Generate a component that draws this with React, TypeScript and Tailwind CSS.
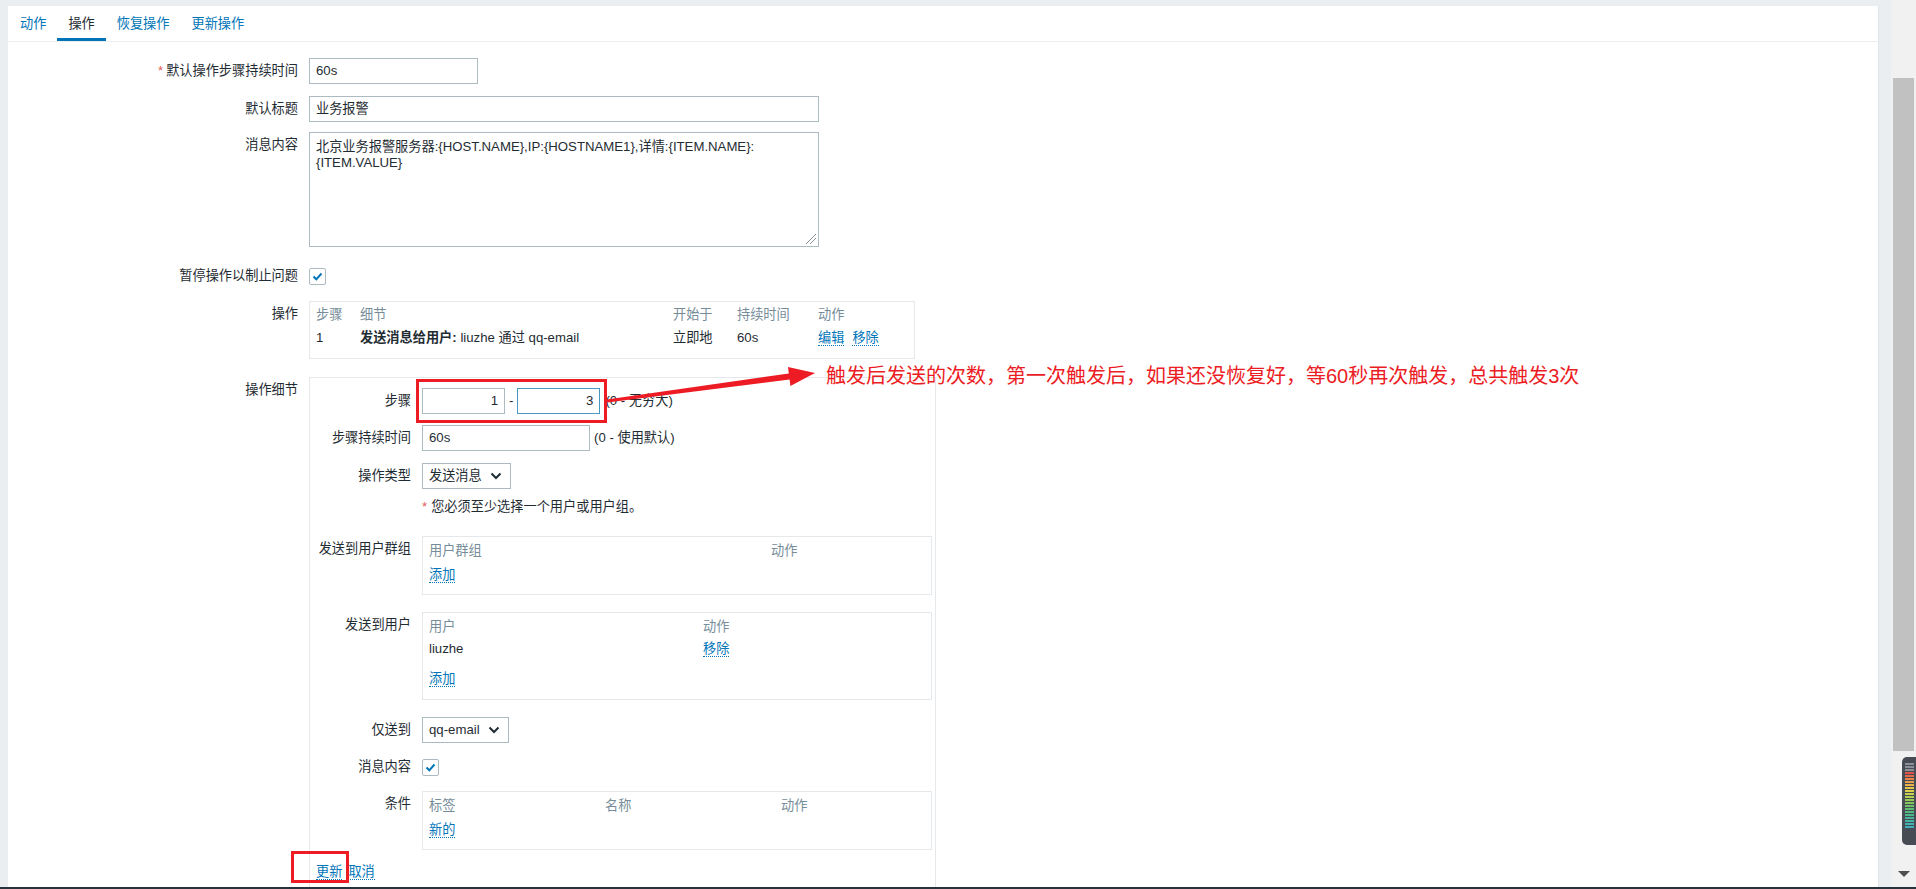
import React from "react";

const FONT = "font-['Liberation_Sans','Noto_Sans_CJK_SC',sans-serif]";
const LINK = "inline-block leading-[15px] text-[#0275b8] border-b border-dotted border-[#0275b8]";
const GREY = "text-[#768d99]";

const tabs = ["动作", "操作", "恢复操作", "更新操作"];

const meterColors = [
  "#8a8f98", "#8a8f98", "#8a8f98", "#e0524a", "#e46a4a", "#e8844a", "#e99c4a", "#e9b24a",
  "#e6c64a", "#d9d04c", "#c6d04e", "#b0cd52", "#98c958", "#82c560", "#6ec169", "#5ebd74",
  "#52ba80", "#4ab78c", "#46b598", "#44b3a4", "#42b1b0", "#40afba",
];

function Checkbox() {
  return (
    <div className="flex h-[17px] w-[17px] items-center justify-center rounded-[2px] border border-[#acbbc2] bg-white">
      <svg width="13" height="13" viewBox="0 0 13 13">
        <polyline points="2.5,6.5 5.3,9.3 10.5,3.5" fill="none" stroke="#0275b8" strokeWidth="2" />
      </svg>
    </div>
  );
}

function Chevron() {
  return (
    <svg width="12" height="8" viewBox="0 0 12 8">
      <polyline points="1.5,1.5 6,6 10.5,1.5" fill="none" stroke="#1f2c33" strokeWidth="2" />
    </svg>
  );
}

function Select({ value, width }: { value: string; width: string }) {
  return (
    <div className={`flex h-[26px] ${width} items-center justify-between border border-[#acbbc2] bg-white pl-[6px] pr-[8px]`}>
      <span>{value}</span>
      <Chevron />
    </div>
  );
}

function Row({ label, required, children, className = "" }: { label: string; required?: boolean; children: React.ReactNode; className?: string }) {
  return (
    <div className={`flex items-start ${className}`}>
      <div className="w-[290px] shrink-0 whitespace-nowrap text-right leading-[26px]">
        {required && <span className="mr-[3px] text-[#e45959]">*</span>}
        {label}
      </div>
      <div className="ml-[11px]">{children}</div>
    </div>
  );
}

function InnerRow({ label, children, className = "" }: { label?: string; children: React.ReactNode; className?: string }) {
  return (
    <div className={`flex items-start ${className}`}>
      <div className="w-[101px] shrink-0 whitespace-nowrap text-right leading-[26px]">{label}</div>
      <div className="relative ml-[11px]">{children}</div>
    </div>
  );
}

function MiniTable({ cols, rows, footer, tall }: { cols: { title: string; w: string }[]; rows?: React.ReactNode[][]; footer: string; tall?: boolean }) {
  return (
    <div className={`w-[510px] border border-[#e6e9eb] px-[6px] pt-[4px] ${tall ? "pb-[8px]" : "pb-[7px]"}`}>
      <div className={`flex h-[20px] items-center ${GREY}`}>
        {cols.map((c) => (
          <div key={c.title} className={c.w}>{c.title}</div>
        ))}
      </div>
      {rows?.map((r, i) => (
        <div key={i} className="flex h-[24px] items-center">
          {r.map((cell, j) => (
            <div key={j} className={cols[j].w}>{cell}</div>
          ))}
        </div>
      ))}
      <div className={`flex h-[24px] items-center ${tall ? "mt-[6px]" : "mt-[2px]"}`}>
        <span className={LINK}>{footer}</span>
      </div>
    </div>
  );
}

function Scrollbar() {
  return (
    <div className="flex w-[25px] shrink-0 flex-col bg-[#f1f1f1]">
      <div className="ml-[2px] mt-[78px] h-[673px] w-[21px] bg-[#c1c1c1]" />
      <div className="ml-[11px] mt-[6px] flex h-[88px] w-[14px] flex-col rounded-l-[5px] bg-[#474b53] pl-[3px] pt-[6px]">
        {meterColors.map((c, i) => (
          <div key={i} className="mb-px h-[2px] w-[9px]" style={{ backgroundColor: c }} />
        ))}
      </div>
      <div className="ml-[7px] mt-[26px]">
        <svg width="12" height="6" viewBox="0 0 12 6">
          <polygon points="0,0 12,0 6,6" fill="#505050" />
        </svg>
      </div>
    </div>
  );
}

export default function App() {
  return (
    <div className={`relative flex h-[889px] w-[1916px] flex-col overflow-hidden bg-[#ebeef0] text-[13.2px] text-[#1f2c33] ${FONT}`}>
      <div className="flex min-h-0 flex-1">
        <div className="min-w-0 flex-1 pl-[8px] pr-[12px] pt-[6px]">
          <div className="h-full overflow-hidden border-r border-[#dfe4e7] bg-white">
            {/* tabs */}
            <div className="flex h-[36px] border-b border-[#ebeef0] pl-px">
              {tabs.map((t) => (
                <div
                  key={t}
                  className={`flex items-center border-b-[3px] px-[11px] pt-[3px] ${
                    t === "操作" ? "border-[#0275b8] text-[#1f2c33]" : "border-transparent text-[#0275b8]"
                  }`}
                >
                  {t}
                </div>
              ))}
            </div>

            <Row label="默认操作步骤持续时间" required className="mt-[16px]">
              <div className="flex h-[26px] w-[169px] items-center border border-[#acbbc2] px-[6px]">60s</div>
            </Row>
            <Row label="默认标题" className="mt-[12px]">
              <div className="flex h-[26px] w-[510px] items-center border border-[#acbbc2] px-[6px]">业务报警</div>
            </Row>
            <Row label="消息内容" className="mt-[10px]">
              <div className="relative h-[115px] w-[510px] border border-[#acbbc2] px-[6px] pt-[6px] leading-[16px]">
                北京业务报警服务器:{"{HOST.NAME}"},IP:{"{HOSTNAME1}"},详情:{"{ITEM.NAME}"}:
                <br />
                {"{ITEM.VALUE}"}
                <svg className="absolute bottom-[2px] right-[2px]" width="11" height="11" viewBox="0 0 11 11">
                  <line x1="1" y1="11" x2="11" y2="1" stroke="#8a959b" strokeWidth="1" />
                  <line x1="5" y1="11" x2="11" y2="5" stroke="#8a959b" strokeWidth="1" />
                </svg>
              </div>
            </Row>
            <Row label="暂停操作以制止问题" className="mt-[16px]">
              <div className="flex h-[26px] items-center">
                <Checkbox />
              </div>
            </Row>
            <Row label="操作" className="mt-[12px]">
              <div className="w-[606px] border border-[#e6e9eb] px-[6px] pb-[7px] pt-[3px]">
                <div className={`grid h-[20px] grid-cols-[44px_313px_64px_81px_1fr] items-center ${GREY}`}>
                  <div>步骤</div>
                  <div>细节</div>
                  <div>开始于</div>
                  <div>持续时间</div>
                  <div>动作</div>
                </div>
                <div className="grid h-[26px] grid-cols-[44px_313px_64px_81px_1fr] items-center">
                  <div>1</div>
                  <div>
                    <span className="font-bold">发送消息给用户:</span> liuzhe 通过 qq-email
                  </div>
                  <div>立即地</div>
                  <div>60s</div>
                  <div className="flex gap-[8px]">
                    <span className={LINK}>编辑</span>
                    <span className={LINK}>移除</span>
                  </div>
                </div>
              </div>
            </Row>
            <Row label="操作细节" className="mt-[18px]">
              <div className="w-[627px] border border-[#e6e9eb] pb-[60px] pt-[10px]">
                <InnerRow label="步骤">
                  <div className="flex items-center">
                    <div className="flex h-[26px] w-[83px] items-center justify-end border border-[#acbbc2] px-[6px]">1</div>
                    <span className="mx-[4px]">-</span>
                    <div className="flex h-[26px] w-[83px] items-center justify-end border border-[#4796c4] px-[6px]">3</div>
                    <span className="ml-[5px]">(0 - 无穷大)</span>
                  </div>
                  <div className="pointer-events-none absolute left-[-6px] top-[-9px] h-[44px] w-[191px] border-[3px] border-[#ed1c24]" />
                </InnerRow>
                <InnerRow label="步骤持续时间" className="mt-[11px]">
                  <div className="flex items-center">
                    <div className="flex h-[26px] w-[168px] items-center border border-[#acbbc2] px-[6px]">60s</div>
                    <span className="ml-[4px]">(0 - 使用默认)</span>
                  </div>
                </InnerRow>
                <InnerRow label="操作类型" className="mt-[12px]">
                  <Select value="发送消息" width="w-[89px]" />
                </InnerRow>
                <InnerRow className="mt-[7px]">
                  <div className="leading-[22px]">
                    <span className="mr-[4px] text-[#e45959]">*</span>您必须至少选择一个用户或用户组。
                  </div>
                </InnerRow>
                <InnerRow label="发送到用户群组" className="mt-[18px]">
                  <MiniTable cols={[{ title: "用户群组", w: "w-[342px]" }, { title: "动作", w: "flex-1" }]} footer="添加" />
                </InnerRow>
                <InnerRow label="发送到用户" className="mt-[17px]">
                  <MiniTable
                    cols={[{ title: "用户", w: "w-[274px]" }, { title: "动作", w: "flex-1" }]}
                    rows={[["liuzhe", <span className={LINK}>移除</span>]]}
                    footer="添加"
                    tall
                  />
                </InnerRow>
                <InnerRow label="仅送到" className="mt-[17px]">
                  <Select value="qq-email" width="w-[87px]" />
                </InnerRow>
                <InnerRow label="消息内容" className="mt-[11px]">
                  <div className="flex h-[26px] items-center">
                    <Checkbox />
                  </div>
                </InnerRow>
                <InnerRow label="条件" className="mt-[11px]">
                  <MiniTable
                    cols={[
                      { title: "标签", w: "w-[176px]" },
                      { title: "名称", w: "w-[176px]" },
                      { title: "动作", w: "flex-1" },
                    ]}
                    footer="新的"
                  />
                </InnerRow>
                <div className="relative mt-[10px] flex h-[24px] items-center gap-[6px] pl-[6px]">
                  <span className={LINK}>更新</span>
                  <span className={LINK}>取消</span>
                  <div className="pointer-events-none absolute left-[-19px] top-[-9px] h-[32px] w-[58px] border-[3px] border-[#ed1c24]" />
                </div>
              </div>
            </Row>
          </div>
        </div>
        <Scrollbar />
      </div>
      <div className="h-[2px] shrink-0 bg-[#27323a]" />

      {/* annotation arrow and note */}
      <svg className="pointer-events-none absolute left-0 top-0" width="1916" height="889">
        <polygon
          points="607.2,402.5 789.6,379.5 790.4,386 815,373 788,367 788.8,373.5 606.8,399.5"
          fill="#ed1c24"
        />
      </svg>
      <div className="pointer-events-none absolute left-[826px] top-[364px] whitespace-nowrap text-[20px] leading-[24px] text-[#ec1c24]">
        触发后发送的次数，第一次触发后，如果还没恢复好，等60秒再次触发，总共触发3次
      </div>
    </div>
  );
}
